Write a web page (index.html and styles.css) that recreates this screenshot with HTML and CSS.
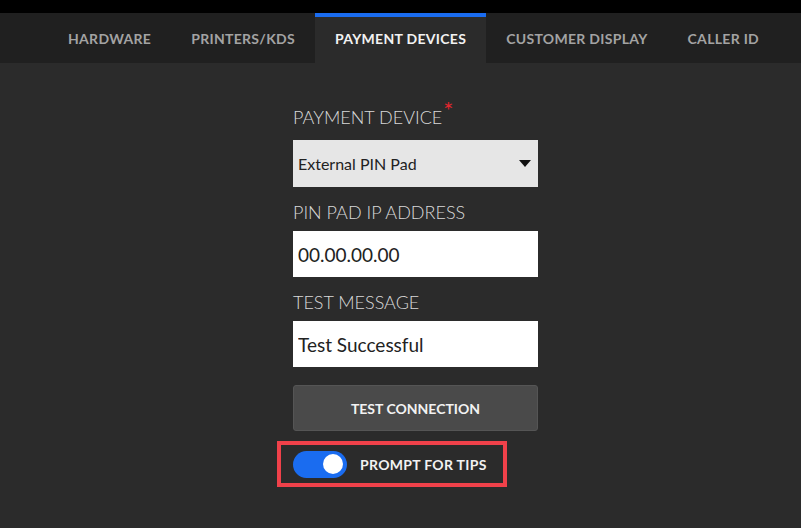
FILE: index.html
```html
<!DOCTYPE html>
<html lang="en">

<head>
    <meta charset="UTF-8">
    <meta name="viewport" content="width=device-width, initial-scale=1.0">
    <title>Payment Devices</title>
    <link rel="stylesheet" href="styles.css">
</head>

<body>

    <div class="top-bar"></div>

    <!-- Settings tabs -->
    <nav class="tabs">
        <a class="tab" href="#">Hardware</a>
        <a class="tab" href="#">Printers/KDS</a>
        <a class="tab active" href="#">Payment Devices</a>
        <a class="tab" href="#">Customer Display</a>
        <a class="tab" href="#">Caller ID</a>
    </nav>

    <!-- Payment device form -->
    <main class="device-form">
        <label class="field-label required" for="device">Payment Device<span class="star">*</span></label>
        <div class="select-wrap">
            <select id="device" class="field select">
                <option>External PIN Pad</option>
            </select>
            <span class="caret"></span>
        </div>

        <label class="field-label" for="ip">PIN Pad IP Address</label>
        <input class="field input" type="text" id="ip" value="00.00.00.00">

        <label class="field-label" for="message">Test Message</label>
        <input class="field input" type="text" id="message" value="Test Successful">

        <button class="test-btn" type="button">Test Connection</button>

        <div class="tips-box">
            <label class="switch">
                <input type="checkbox" checked>
                <span class="slider"></span>
            </label>
            <span class="tips-label">Prompt for tips</span>
        </div>
    </main>

</body>

</html>
```

FILE: styles.css
```css
/* General Styles */
html,
body {
    margin: 0;
    height: 100%;
    background-color: #2b2b2b;
    font-family: Lato, "Open Sans", sans-serif;
}

.top-bar {
    height: 13px;
    background: #000;
}

/* Tabs */
.tabs {
    display: flex;
    height: 50px;
    padding-left: 48px;
    background: #202020;
}

.tab {
    display: flex;
    align-items: center;
    padding: 0 20px 4px;
    color: #a3a3a3;
    font-size: 14px;
    font-weight: 700;
    letter-spacing: 0.3px;
    text-transform: uppercase;
    text-decoration: none;
    border-top: 4px solid transparent;
}

.tab.active {
    color: #f2f2f2;
    background: #2b2b2b;
    border-top-color: #1a6cf0;
}

/* Form */
.device-form {
    width: 245px;
    margin-left: 293px;
    padding-top: 42px;
    display: flex;
    flex-direction: column;
}

.field-label {
    display: block;
    margin: 13px 0 7px;
    color: #d9d9d9;
    font-size: 18px;
    font-weight: 300;
    line-height: 24px;
    text-transform: uppercase;
}

.field-label.required {
    margin: 0 0 11px;
}

.star {
    color: #e3262e;
    font-size: 24px;
    font-weight: 400;
    line-height: 0;
    position: relative;
    top: -5px;
    margin-left: 1px;
}

.field {
    box-sizing: border-box;
    width: 100%;
    height: 47px;
    border: none;
    border-radius: 0;
    padding: 0 5px;
    font-family: Lato, "Open Sans", sans-serif;
    color: #222;
}

.select-wrap {
    position: relative;
}

.select {
    appearance: none;
    -webkit-appearance: none;
    background: #e6e6e6;
    font-size: 16px;
}

.caret {
    position: absolute;
    right: 7px;
    top: 20px;
    width: 0;
    height: 0;
    border-left: 6px solid transparent;
    border-right: 6px solid transparent;
    border-top: 7px solid #111;
}

.input {
    background: #fff;
    font-size: 19px;
    height: 46px;
}

.test-btn {
    margin-top: 18px;
    height: 46px;
    background: #4a4a4a;
    border: 1px solid #555;
    border-radius: 3px;
    color: #f2f2f2;
    font-family: Lato, "Open Sans", sans-serif;
    font-size: 14px;
    font-weight: 700;
    text-transform: uppercase;
    cursor: pointer;
}

/* Tips toggle */
.tips-box {
    display: flex;
    align-items: center;
    gap: 13px;
    width: 230px;
    height: 46px;
    box-sizing: border-box;
    margin: 10px 0 0 -16px;
    padding-left: 12px;
    border: 4px solid #f0414a;
}

.switch {
    position: relative;
    width: 54px;
    height: 27px;
}

.switch input {
    display: none;
}

.slider {
    position: absolute;
    inset: 0;
    background: #1a6cf0;
    border-radius: 14px;
}

.slider::after {
    content: "";
    position: absolute;
    right: 4px;
    top: 3px;
    width: 20px;
    height: 20px;
    border-radius: 50%;
    background: #fff;
}

.tips-label {
    color: #f2f2f2;
    font-size: 14px;
    font-weight: 700;
    letter-spacing: 0.3px;
    text-transform: uppercase;
}
```
